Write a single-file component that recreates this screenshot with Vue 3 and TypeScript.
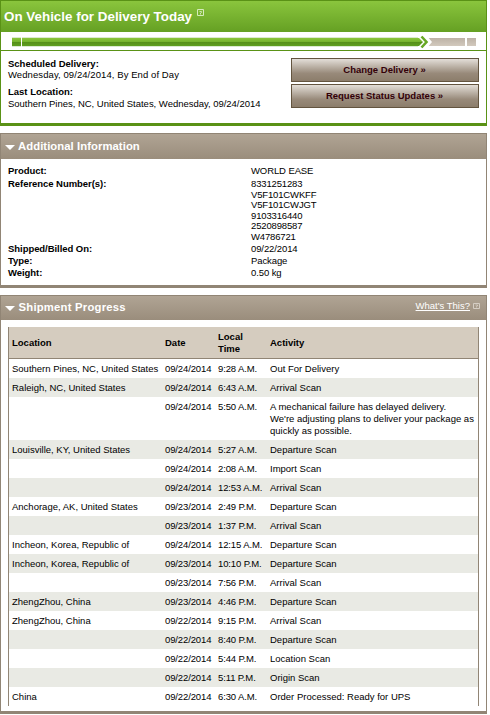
<script setup lang="ts">
interface Scan {
  location: string
  date: string
  time: string
  activity: string
}

const details: { label: string; values: string[] }[] = [
  { label: 'Product:', values: ['WORLD EASE'] },
  {
    label: 'Reference Number(s):',
    values: ['8331251283', 'V5F101CWKFF', 'V5F101CWJGT', '9103316440', '2520898587', 'W4786721'],
  },
  { label: 'Shipped/Billed On:', values: ['09/22/2014'] },
  { label: 'Type:', values: ['Package'] },
  { label: 'Weight:', values: ['0.50 kg'] },
]

const scans: Scan[] = [
  { location: 'Southern Pines, NC, United States', date: '09/24/2014', time: '9:28 A.M.', activity: 'Out For Delivery' },
  { location: 'Raleigh, NC, United States', date: '09/24/2014', time: '6:43 A.M.', activity: 'Arrival Scan' },
  { location: '', date: '09/24/2014', time: '5:50 A.M.', activity: "A mechanical failure has delayed delivery.\nWe're adjusting plans to deliver your package as\nquickly as possible." },
  { location: 'Louisville, KY, United States', date: '09/24/2014', time: '5:27 A.M.', activity: 'Departure Scan' },
  { location: '', date: '09/24/2014', time: '2:08 A.M.', activity: 'Import Scan' },
  { location: '', date: '09/24/2014', time: '12:53 A.M.', activity: 'Arrival Scan' },
  { location: 'Anchorage, AK, United States', date: '09/23/2014', time: '2:49 P.M.', activity: 'Departure Scan' },
  { location: '', date: '09/23/2014', time: '1:37 P.M.', activity: 'Arrival Scan' },
  { location: 'Incheon, Korea, Republic of', date: '09/24/2014', time: '12:15 A.M.', activity: 'Departure Scan' },
  { location: 'Incheon, Korea, Republic of', date: '09/23/2014', time: '10:10 P.M.', activity: 'Departure Scan' },
  { location: '', date: '09/23/2014', time: '7:56 P.M.', activity: 'Arrival Scan' },
  { location: 'ZhengZhou, China', date: '09/23/2014', time: '4:46 P.M.', activity: 'Departure Scan' },
  { location: 'ZhengZhou, China', date: '09/22/2014', time: '9:15 P.M.', activity: 'Arrival Scan' },
  { location: '', date: '09/22/2014', time: '8:40 P.M.', activity: 'Departure Scan' },
  { location: '', date: '09/22/2014', time: '5:44 P.M.', activity: 'Location Scan' },
  { location: '', date: '09/22/2014', time: '5:11 P.M.', activity: 'Origin Scan' },
  { location: 'China', date: '09/22/2014', time: '6:30 A.M.', activity: 'Order Processed: Ready for UPS' },
]
</script>

<template>
  <main class="page">
    <section class="card status">
      <header class="status-head">
        <h1>On Vehicle for Delivery Today</h1>
        <svg class="help" width="8" height="8" viewBox="0 0 8 8" fill="none" stroke="#d5ebbb">
          <path d="M.5.5h6v6h-6z" /><path d="M2.500 2.500h2v1L3.500 4v1.500" stroke-width=".9" />
        </svg>
      </header>
      <div class="track">
        <svg width="485" height="18" viewBox="0 0 485 18">
          <defs>
            <linearGradient id="bar" x1="0" y1="0" x2="0" y2="1">
              <stop offset="0" stop-color="#8cc63c" />
              <stop offset=".5" stop-color="#74b22c" />
              <stop offset=".55" stop-color="#569019" />
              <stop offset="1" stop-color="#5f9f20" />
            </linearGradient>
            <linearGradient id="rest" x1="0" y1="0" x2="0" y2="1">
              <stop offset="0" stop-color="#bdb2a6" />
              <stop offset="1" stop-color="#d2c9bd" />
            </linearGradient>
          </defs>
          <path d="M11 5h410v10H11z" fill="#dcead0" />
          <path d="M11 6h9v8h-9z" fill="url(#bar)" />
          <path d="M20 5h1v10h-1z" fill="#fff" />
          <path d="M427 6h37v8h-37zM466 6h9v8h-9z" fill="url(#rest)" />
          <path d="M417 4h9l5 6-5 6h-9z" fill="#fff" />
          <path d="M21 6h397l4 4-4 4H21z" fill="url(#bar)" />
          <path d="M420.500 4.500l5 5.500-5 5.500" fill="none" stroke="#67a824" stroke-width="2.600" />
        </svg>
      </div>
      <div class="status-body">
        <div class="summary">
          <b>Scheduled Delivery:</b>
          <p class="when">Wednesday, 09/24/2014, By End of Day</p>
          <b class="last">Last Location:</b>
          <p class="where">Southern Pines, NC, United States, Wednesday, 09/24/2014</p>
        </div>
        <div class="actions">
          <button type="button">Change Delivery »</button>
          <button type="button">Request Status Updates »</button>
        </div>
      </div>
    </section>

    <section class="card info">
      <header class="bar-head">
        <i class="arrow"></i>
        <h2>Additional Information</h2>
      </header>
      <dl>
        <div v-for="d in details" :key="d.label" class="detail" :class="{ multi: d.values.length > 1 }">
          <dt>{{ d.label }}</dt>
          <dd><span v-for="v in d.values" :key="v">{{ v }}</span></dd>
        </div>
      </dl>
    </section>

    <section class="card progress">
      <header class="bar-head">
        <i class="arrow"></i>
        <h2 class="wide">Shipment Progress</h2>
        <div class="whats">
          <a>What's This?</a>
          <svg width="8" height="8" viewBox="0 0 8 8" fill="none" stroke="#d5cdc3">
            <path d="M.5 1.500h6v5h-6z" /><path d="M2.500 3h2v1L3.500 4.500v1" stroke-width=".9" />
          </svg>
        </div>
      </header>
      <table>
        <thead>
          <tr>
            <th class="c-loc">Location</th>
            <th class="c-date">Date</th>
            <th class="c-time">Local<br />Time</th>
            <th>Activity</th>
          </tr>
        </thead>
        <tbody>
          <tr v-for="(s, i) in scans" :key="i" :class="{ odd: i % 2 === 1 }">
            <td class="loc">{{ s.location }}</td>
            <td class="num">{{ s.date }}</td>
            <td class="num">{{ s.time }}</td>
            <td class="act">{{ s.activity }}</td>
          </tr>
        </tbody>
      </table>
    </section>
  </main>
</template>

<style>
body {
  margin: 0;
  background: #fff;
}
</style>

<style scoped>
* {
  box-sizing: border-box;
}
.page {
  width: 487px;
  font: 9.5px/12px 'Liberation Sans', Arial, sans-serif;
  letter-spacing: 0;
  color: #000;
  display: flex;
  flex-direction: column;
  gap: 7px;
  white-space: nowrap;
}
h1, h2, p, dl, dd {
  margin: 0;
}
.card {
  border: 1px solid #918575;
  border-bottom-width: 3px;
}
.status {
  height: 126px;
  border-color: #5a9216;
}
.status-head {
  height: 31px;
  display: flex;
  background: linear-gradient(#8ac53d, #65a023);
  color: #fff;
  padding-left: 3px;
}
h1 {
  font-size: 13.4px;
  line-height: 31px;
  letter-spacing: 0;
}
.help {
  margin: 8px 0 0 5px;
}
.track {
  height: 19px;
  border-bottom: 1px solid #5a9216;
}
.track svg {
  display: block;
}
.status-body {
  display: flex;
  justify-content: space-between;
  padding: 7px 7px 0;
}
.summary b {
  display: block;
}
.when {
  margin-top: -1px;
  letter-spacing: 0.08px;
}
.summary .last {
  margin-top: 5px;
}
.where {
  letter-spacing: -0.02px;
}
.actions {
  display: flex;
  flex-direction: column;
  gap: 2px;
}
button {
  width: 188px;
  height: 24px;
  padding: 0 1px 0 0;
  border: 1px solid #63543f;
  background: linear-gradient(#e3ded8, #988a7a 65%, #8c7d6b);
  color: #330008;
  font: bold 9.5px/22px 'Liberation Sans', Arial, sans-serif;
}
.info {
  height: 155px;
}
.bar-head {
  height: 25px;
  display: flex;
  align-items: center;
  background: linear-gradient(#b0a494, #9a8d7c);
  color: #fff;
  padding-left: 4px;
}
.arrow {
  border: 5px solid transparent;
  border-top-color: #fff;
  border-bottom: 0;
  margin: 1px 3px 0 0;
}
h2 {
  font-size: 11.3px;
  line-height: 24px;
  letter-spacing: 0.06px;
  margin-top: -2px;
}
.wide {
  letter-spacing: 0.22px;
  margin-left: 0.5px;
}
dl {
  padding: 6px 7px;
}
.detail {
  display: flex;
}
.detail dt {
  width: 243px;
  font-weight: bold;
  letter-spacing: -0.05px;
}
.detail span {
  display: block;
  letter-spacing: -0.1px;
}
.multi {
  height: 66px;
  padding-top: 1px;
}
.detail.multi span {
  height: 10.6px;
  letter-spacing: -0.15px;
}
.progress {
  height: 419px;
}
.progress .bar-head {
  height: 24px;
}
.whats {
  display: flex;
  gap: 3px;
  align-items: center;
  margin: -5px 5px 0 auto;
}
.whats a {
  text-decoration: underline;
}
table {
  width: 471px;
  margin: 7px 0 0 7px;
  border: solid #918575;
  border-width: 0 1px;
  border-collapse: separate;
  border-spacing: 0;
  table-layout: fixed;
}
th, td {
  padding: 4px 0 3px 3px;
  text-align: left;
  vertical-align: top;
}
th {
  height: 32px;
  padding: 0 0 0 3px;
  vertical-align: middle;
  background: #d5ccbf;
  border-bottom: 1px solid #918575;
}
.c-loc {
  width: 153px;
}
.c-date {
  width: 53px;
}
.c-time {
  width: 52px;
}
.num {
  letter-spacing: -0.12px;
}
.odd td {
  background: #e9eae4;
}
.act {
  white-space: pre-line;
}
</style>
